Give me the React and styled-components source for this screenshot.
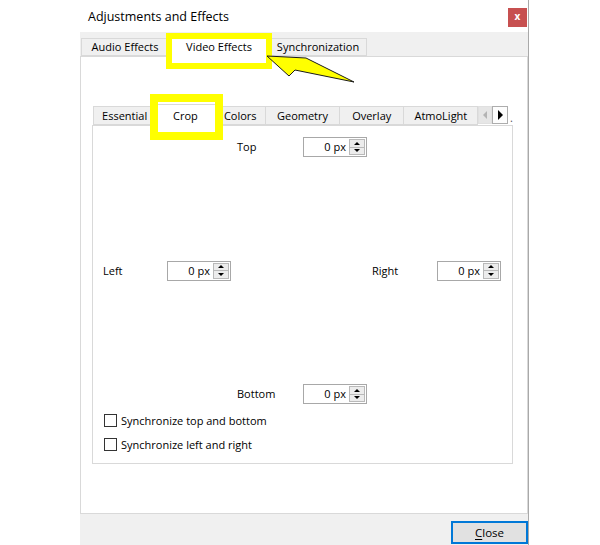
import React from 'react';
import styled, { createGlobalStyle } from 'styled-components';

const GlobalStyle = createGlobalStyle`
    body {
        margin: 0;
        background: #fff;
        font-family: "Open Sans", "Noto Sans", sans-serif;
        font-size: 11px;
        color: #000;
    }
`

const outerTabs = [
    { label: 'Audio Effects', width: 88 },
    { label: 'Video Effects', width: 102, active: true },
    { label: 'Synchronization', width: 98 },
];

const innerTabs = [
    { label: 'Essential', width: 64 },
    { label: 'Crop', width: 60, active: true },
    { label: 'Colors', width: 51 },
    { label: 'Geometry', width: 75 },
    { label: 'Overlay', width: 65 },
    { label: 'AtmoLight', width: 75 },
];

const Spin = ({ value }) => (
    <SpinBox>
        <SpinValue>{value}</SpinValue>
        <SpinButtons>
            <SpinHalf><Tri $dir="up" /></SpinHalf>
            <SpinHalf><Tri $dir="down" /></SpinHalf>
        </SpinButtons>
    </SpinBox>
);

const App = () => {
    return (
        <Page>
            <GlobalStyle />
            <Window>
                <TitleBar>
                    <Title>Adjustments and Effects</Title>
                    <CloseX>x</CloseX>
                </TitleBar>

                <TabStrip>
                    {outerTabs.map(t => (
                        <OuterTab key={t.label} $active={t.active} style={{ width: t.width }}>
                            {t.label}
                            {t.active && <Highlight $top={-3} $side={-3} $bottom={-12} $thick={6} />}
                        </OuterTab>
                    ))}
                </TabStrip>

                <Pane>
                    <InnerTabBar>
                        {innerTabs.map(t => (
                            <InnerTab key={t.label} $active={t.active} style={{ width: t.width }}>
                                {t.label}
                                {t.active && <Highlight $top={-11} $side={-6} $right={-8} $bottom={-14} $thick={8} />}
                            </InnerTab>
                        ))}
                        <ScrollBtn $disabled><Tri $dir="left" $color="#b4b4b4" /></ScrollBtn>
                        <ScrollBtn><Tri $dir="right" /></ScrollBtn>
                        <Clipped>.</Clipped>
                    </InnerTabBar>

                    <InnerPane>
                        <CropGrid>
                            <Label $col={3} $row={1} $indent={6}>Top</Label>
                            <Cell $col={4} $row={1}><Spin value="0 px" /></Cell>

                            <Label $col={1} $row={2}>Left</Label>
                            <Cell $col={2} $row={2}><Spin value="0 px" /></Cell>
                            <Label $col={5} $row={2} $indent={5}>Right</Label>
                            <Cell $col={6} $row={2}><Spin value="0 px" /></Cell>

                            <Label $col={3} $row={3} $indent={6}>Bottom</Label>
                            <Cell $col={4} $row={3}><Spin value="0 px" /></Cell>
                        </CropGrid>

                        <CheckList>
                            <CheckRow><Box />Synchronize top and bottom</CheckRow>
                            <CheckRow><Box />Synchronize left and right</CheckRow>
                        </CheckList>
                    </InnerPane>
                </Pane>

                <Footer>
                    <PushButton><u>C</u>lose</PushButton>
                </Footer>
            </Window>

            <Arrow width="600" height="545" viewBox="0 0 600 545">
                <polygon
                    points="267,56 306,58 354,82 295,70 289,76"
                    fill="#ffff00"
                    stroke="#1a1a1a"
                    strokeWidth="1"
                    strokeLinejoin="miter"
                />
            </Arrow>
        </Page>
    );
}

const Page = styled.div`
    position: relative;
    width: 600px;
    height: 545px;
    overflow: hidden;
`
const Window = styled.div`
    margin-left: 80px;
    width: 448px;
    height: 545px;
    border-right: 1px solid #a9a9a9;
    display: flex;
    flex-direction: column;
`
const TitleBar = styled.div`
    height: 32px;
    display: flex;
    justify-content: space-between;
    align-items: flex-start;
    background: #fff;
`
const Title = styled.div`
    margin: 8px 0 0 8px;
    font-size: 12.5px;
    line-height: 17px;
`
const CloseX = styled.div`
    margin: 8px 1px 0 0;
    width: 19px;
    height: 19px;
    background: #c75050;
    color: #fff;
    font-weight: bold;
    font-size: 10px;
    line-height: 17px;
    text-align: center;
`
const TabStrip = styled.div`
    height: 24px;
    background: #f0f0f0;
    display: flex;
    align-items: flex-end;
    padding-left: 2px;
    position: relative;
    z-index: 2;
`
const OuterTab = styled.div`
    position: relative;
    box-sizing: border-box;
    height: ${p => p.$active ? '22px' : '18px'};
    margin-bottom: ${p => p.$active ? '-1px' : '0'};
    background: ${p => p.$active ? '#fff' : '#f0f0f0'};
    border: 1px solid #d9d9d9;
    border-bottom: ${p => p.$active ? 'none' : '1px solid #d9d9d9'};
    margin-left: -1px;
    display: flex;
    align-items: center;
    justify-content: center;
    line-height: 16px;
`
const Highlight = styled.div`
    position: absolute;
    top: ${p => p.$top}px;
    left: ${p => p.$side}px;
    right: ${p => p.$right ?? p.$side}px;
    bottom: ${p => p.$bottom}px;
    border: ${p => p.$thick}px solid #ffff00;
    pointer-events: none;
    z-index: 5;
`
const Pane = styled.div`
    flex: 1;
    background: #fff;
    border: 1px solid #d9d9d9;
    padding: 49px 14px 49px 11px;
    display: flex;
    flex-direction: column;
`
const InnerTabBar = styled.div`
    height: 19px;
    display: flex;
    align-items: flex-end;
    padding-left: 1px;
    position: relative;
    z-index: 2;
`
const InnerTab = styled.div`
    position: relative;
    box-sizing: border-box;
    height: ${p => p.$active ? '22px' : '19px'};
    margin-bottom: ${p => p.$active ? '-1px' : '0'};
    background: ${p => p.$active ? '#fff' : '#f0f0f0'};
    border: 1px solid #d9d9d9;
    border-bottom: ${p => p.$active ? 'none' : '1px solid #d9d9d9'};
    display: flex;
    align-items: center;
    justify-content: center;
    line-height: 16px;
    & + & {
        border-left: none;
    }
`
const ScrollBtn = styled.div`
    box-sizing: border-box;
    width: ${p => p.$disabled ? '14px' : '16px'};
    height: 18px;
    margin-bottom: 1px;
    background: ${p => p.$disabled ? '#e6e6e6' : '#fdfdfd'};
    border: 1px solid ${p => p.$disabled ? '#e0e0e0' : '#adadad'};
    display: flex;
    align-items: center;
    justify-content: center;
`
const Clipped = styled.span`
    margin: 0 0 2px 2px;
    color: #555;
    line-height: 10px;
`
const Tri = styled.span`
    width: 0;
    height: 0;
    border-style: solid;
    ${p => p.$dir === 'up' && `border-width: 0 3px 3px 3px; border-color: transparent transparent #000 transparent;`}
    ${p => p.$dir === 'down' && `border-width: 3px 3px 0 3px; border-color: #000 transparent transparent transparent;`}
    ${p => p.$dir === 'left' && `border-width: 4px 4px 4px 0; border-color: transparent ${p.$color || '#000'} transparent transparent;`}
    ${p => p.$dir === 'right' && `border-width: 5px 0 5px 5px; border-color: transparent transparent transparent ${p.$color || '#000'};`}
`
const InnerPane = styled.div`
    height: 339px;
    box-sizing: border-box;
    border: 1px solid #d9d9d9;
    padding: 11px 10px 12px 10px;
    display: flex;
    flex-direction: column;
`
const CropGrid = styled.div`
    flex: 1;
    display: grid;
    grid-template-columns: 64px 64px 72px 64px 70px 64px;
    grid-template-rows: 20px 1fr 20px;
    align-items: center;
`
const Label = styled.div`
    grid-column: ${p => p.$col};
    grid-row: ${p => p.$row};
    padding-left: ${p => p.$indent || 0}px;
    line-height: 16px;
`
const Cell = styled.div`
    grid-column: ${p => p.$col};
    grid-row: ${p => p.$row};
`
const SpinBox = styled.div`
    box-sizing: border-box;
    width: 64px;
    height: 20px;
    border: 1px solid #a8a8a8;
    background: #fff;
    display: flex;
    align-items: stretch;
`
const SpinValue = styled.div`
    flex: 1;
    text-align: right;
    padding-right: 3px;
    line-height: 18px;
`
const SpinButtons = styled.div`
    width: 16px;
    margin: 1px 1px 1px 0;
    display: flex;
    flex-direction: column;
    border: 1px solid #b9b9b9;
    box-sizing: border-box;
`
const SpinHalf = styled.div`
    flex: 1;
    background: #ececec;
    display: flex;
    align-items: center;
    justify-content: center;
    & + & {
        border-top: 1px solid #b9b9b9;
    }
`
const CheckList = styled.div`
    margin-top: 10px;
    display: flex;
    flex-direction: column;
    gap: 11px;
`
const CheckRow = styled.div`
    display: flex;
    align-items: center;
    height: 13px;
    line-height: 13px;
`
const Box = styled.span`
    box-sizing: border-box;
    width: 13px;
    height: 13px;
    margin: 0 4px 0 1px;
    border: 1px solid #333;
    background: #fff;
`
const Footer = styled.div`
    height: 31px;
    box-sizing: border-box;
    background: #f0f0f0;
    display: flex;
    justify-content: flex-end;
    align-items: flex-start;
    padding-top: 7px;
`
const PushButton = styled.div`
    box-sizing: border-box;
    width: 77px;
    height: 23px;
    background: #e1e1e1;
    border: 2px solid #0078d7;
    text-align: center;
    line-height: 19px;
    font-size: 11.5px;
    u {
        text-underline-offset: 2px;
    }
`
const Arrow = styled.svg`
    position: absolute;
    left: 0;
    top: 0;
    pointer-events: none;
    z-index: 10;
`

export default App;
